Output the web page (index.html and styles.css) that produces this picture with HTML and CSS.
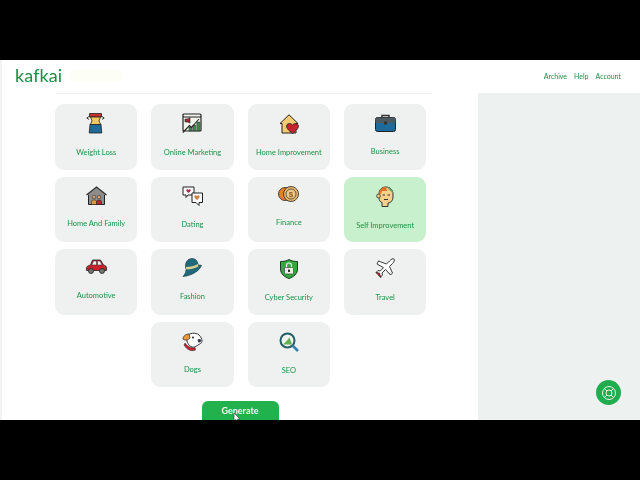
FILE: index.html
```html
<!DOCTYPE html>
<html lang="en">
<head>
<meta charset="utf-8">
<title>Kafkai</title>
<link rel="stylesheet" href="styles.css">
</head>
<body>
<div class="stage">
  <header class="topbar">
    <div class="brand"><span class="logo">kafkai</span><span class="logo-glow"></span></div>
    <nav class="nav"><a>Archive</a><a>Help</a><a>Account</a></nav>
  </header>
  <div class="content">
    <main class="main">
      <div class="panel">
        <div class="grid">
          <div class="card">
            <div class="slot"><svg width="20" height="21" viewBox="0 0 20 21"><path d="M3.500.5h12v3.500h-12z" fill="#c8312c" stroke="#222" stroke-width=".8"/><path d="M4.500 4h10l-1.500 4 2 4H4l2-4z" fill="#f2c75c" stroke="#222" stroke-width=".8"/><path d="M4 11.500h11l.8 8.500H3.200z" fill="#1f6a96" stroke="#222" stroke-width=".8"/><path d="M3 3.500.8 5 3 6.500M16 3.500 18.200 5 16 6.500" fill="none" stroke="#222" stroke-width=".9"/></svg></div>
            <span class="label">Weight Loss</span>
          </div>
          <div class="card">
            <div class="slot"><svg width="20" height="20" viewBox="0 0 20 20"><rect x="1" y="1" width="18" height="17" rx="1" fill="#f4f4ee" stroke="#222" stroke-width="1.200"/><path d="M1 4h18" stroke="#222"/><path d="M3 6h2.500l2.500-1.500V10L5.500 9H3z" fill="#a52a3a" stroke="#222" stroke-width=".6"/><path d="M7 18v-4h2.800v4zM10.800 18v-6h2.800v6zM14.800 18V9h3v9z" fill="#3d8a4a" stroke="#222" stroke-width=".5"/><path d="M.8 19.500 7.500 12.500l2 2L17 6" fill="none" stroke="#222" stroke-width="1.100"/></svg></div>
            <span class="label">Online Marketing</span>
          </div>
          <div class="card">
            <div class="slot slot-low"><svg width="20" height="20" viewBox="0 0 20 20"><path d="M10 .8 1 9.500h2V19h14V9.500h2z" fill="#f4cb72" stroke="#222" stroke-linejoin="round"/><path d="M13.500 19.500C9 16 7.500 14 7.500 12c0-2.500 4-3.500 6-1 2-2.500 6-1.500 6 1 0 2-1.500 4-6 7.500z" fill="#c5232f" stroke="#222" stroke-width=".8"/></svg></div>
            <span class="label">Home Improvement</span>
          </div>
          <div class="card">
            <div class="slot slot-low"><svg width="21" height="18" viewBox="0 0 21 18"><path d="M7 4V1.500h7V4" fill="none" stroke="#333" stroke-width="1.500"/><rect x=".5" y="3.500" width="20" height="14" rx="2" fill="#1c6b9a" stroke="#222"/><path d="M.5 5.500a2 2 0 0 1 2-2h16a2 2 0 0 1 2 2V9H.5z" fill="#4b5a63"/><rect x="9" y="7.500" width="3" height="3" fill="#333"/></svg></div>
            <span class="label lift-1">Business</span>
          </div>

          <div class="card">
            <div class="slot"><svg width="21" height="19" viewBox="0 0 21 19"><path d="M2.500 8h16v10.500h-16z" fill="#8d8d8d" stroke="#222"/><path d="M.5 9 10.500 1l10 8" fill="#8d8d8d" stroke="#333" stroke-width="1.300"/><circle cx="8" cy="11" r="1.800" fill="#d8a06a" stroke="#222" stroke-width=".5"/><circle cx="13" cy="11" r="1.800" fill="#d8a06a" stroke="#222" stroke-width=".5"/><path d="M5.500 18.500v-3c0-2 5-2 5 0v3z" fill="#dd9a3b" stroke="#222" stroke-width=".5"/><path d="M10.500 18.500v-3c0-2 5-2 5 0v3z" fill="#b5262e" stroke="#222" stroke-width=".5"/></svg></div>
            <span class="label lift-2">Home And Family</span>
          </div>
          <div class="card">
            <div class="slot"><svg width="21" height="20" viewBox="0 0 21 20"><path d="M1 1h11v8H6l-2 2.500V9H1z" fill="#fff" stroke="#222"/><path d="M6.500 7C4 5.300 4 3.700 4.800 3.300c.7-.3 1.300 0 1.700.6.400-.6 1-.9 1.700-.6C9 3.700 9 5.300 6.500 7z" fill="#a52a4a"/><path d="M10 7h10.500v9.500H17v3l-3-3h-4z" fill="#fff" stroke="#222"/><path d="M15 14c-3-2-3-4-2.200-4.500.8-.4 1.700 0 2.200.7.500-.7 1.400-1.100 2.200-.7.800.5.800 2.500-2.200 4.500z" fill="#c08850"/></svg></div>
            <span class="label lift-1">Dating</span>
          </div>
          <div class="card">
            <div class="slot"><svg width="21" height="16" viewBox="0 0 21 16"><circle cx="7" cy="8" r="6.500" fill="#e87f25" stroke="#222" stroke-width=".8"/><circle cx="13" cy="8" r="7.500" fill="#edb86a" stroke="#222" stroke-width=".8"/><circle cx="13" cy="8" r="5" fill="#f2c98a" stroke="#222" stroke-width=".7"/><text class="coin" x="13" y="10.500" text-anchor="middle">$</text></svg></div>
            <span class="label lift-3">Finance</span>
          </div>
          <div class="card card-active">
            <div class="slot"><svg width="18" height="21" viewBox="0 0 18 21"><path d="M3 8c0-4.500 3-7 7-7s7 3 7 7v3c0 3-2 6-5 6v3.500H6v-4c-2-.500-3-2.500-3-4.500z" fill="#f6cf8a" stroke="#222" stroke-width=".9"/><path d="M3 8c0-4.500 3-7 7-7l1 4H6l-1 3z" fill="#e0702a"/><path d="M10.500 1c3.500 0 6.500 3 6.500 6l-3.500-3z" fill="#5fa35a"/><circle cx="2.500" cy="10" r="1.900" fill="#f6cf8a" stroke="#222" stroke-width=".7"/><path d="M6.500 9h2.500M11.500 9H14M8 13.500h4" stroke="#222" stroke-width=".9" fill="none"/></svg></div>
            <span class="label">Self Improvement</span>
          </div>

          <div class="card">
            <div class="slot slot-low"><svg width="21" height="15" viewBox="0 0 21 15"><path d="M.5 11V8.500C1 7 3 6.500 4.500 6L6.500 1h8l3 5c2 .5 3 1.500 3 3v2.500H.5z" fill="#c9202c" stroke="#222" stroke-width=".8"/><path d="M7.500 2h3v4H5.800zM11.500 2h2.500L16 6h-4.500z" fill="#f2f2f2" stroke="#222" stroke-width=".5"/><circle cx="5" cy="12" r="2.500" fill="#777" stroke="#222" stroke-width=".8"/><circle cx="16" cy="12" r="2.500" fill="#777" stroke="#222" stroke-width=".8"/></svg></div>
            <span class="label lift-2">Automotive</span>
          </div>
          <div class="card">
            <div class="slot"><svg width="20" height="19" viewBox="0 0 20 19"><path d="M3.500 9C3 4 6 .5 10 .5s6 3 6 6.500c1.500 0 3.500 0 3.500.5-1 2.500-3 5-6.500 7-3 2-7 3.500-12 4C3 16 5 13 3.500 9z" fill="#1f6a7c" stroke="#14343c" stroke-width=".6"/><path d="M4 9c4 0 9-1 12-3l.3 2.500C13 10.500 8 11.500 4.300 11.500z" fill="#ddd08a"/></svg></div>
            <span class="label lift-1">Fashion</span>
          </div>
          <div class="card">
            <div class="slot slot-low"><svg width="18" height="20" viewBox="0 0 18 20"><path d="M9 .5C11.500 2 14 2.500 17.500 2.500V10c0 5-4 8-8.500 9.500C4.500 18 .5 15 .5 10V2.500C4 2.500 6.500 2 9 .5z" fill="#35a93f" stroke="#1d3b22"/><path d="M6.500 9V6.500a2.500 2.500 0 0 1 5 0V9" fill="none" stroke="#eee" stroke-width="1.200"/><rect x="4.500" y="8.500" width="9" height="6.500" rx="1" fill="#eef0e8" stroke="#333" stroke-width=".6"/><rect x="8" y="10.500" width="2" height="2.500" fill="#333"/></svg></div>
            <span class="label">Cyber Security</span>
          </div>
          <div class="card">
            <div class="slot"><svg width="20" height="21" viewBox="0 0 20 21"><path d="M19 1c.8 1 0 3-1.500 4.500l-3 3 3 6.500-2 2L10.500 11.500 7 15l.5 2-2 2-1.200-3.300L1 14.500l2-2 2.200.5 3.300-3.300L2 6 3.500 3l8 3 3-3C16 1.500 18 0 19 1z" fill="#fff" stroke="#222" stroke-width=".9"/><path d="M1 14.500 4.500 15l1.500 5L4 18z" fill="#b5262e" stroke="#222" stroke-width=".5"/></svg></div>
            <span class="label">Travel</span>
          </div>

          <div class="card card-skip">
            <div class="slot slot-low"><svg width="21" height="20" viewBox="0 0 21 20"><path d="M5 4c2-3 9-4 12-1 2 2 3 4 3 6s-2 3-4 4l-3 2c-4 1-7-2-8-6z" fill="#fff" stroke="#222" stroke-width=".9"/><path d="M1 7c0-3 3-5 6-5l1 4c-2 2-5 3-7 1z" fill="#e9983a" stroke="#222" stroke-width=".7"/><path d="M3 11c2 3 6 6 10 4.500l.5 2.500c-5 2-9-1-11.500-5z" fill="#c5232f" stroke="#222" stroke-width=".5"/><circle cx="11" cy="5.500" r="1" fill="#222"/><path d="M15.500 8c1-1.500 3-1.500 3.500 0s-1 3-2.500 2.500z" fill="#2b3a4a"/></svg></div>
            <span class="label lift-1">Dogs</span>
          </div>
          <div class="card">
            <div class="slot slot-low"><svg width="20" height="20" viewBox="0 0 20 20"><circle cx="8.500" cy="8.500" r="7" fill="#eef3ee" stroke="#265c66" stroke-width="2"/><path d="M4 12.500 7.500 9l3-3.500L13 12.500z" fill="#63b04f"/><path d="M13.500 13.500l5.500 5.500" stroke="#3a82ad" stroke-width="2.600"/></svg></div>
            <span class="label">SEO</span>
          </div>
        </div>
      </div>
      <button class="generate" type="button">Generate</button>
    </main>
    <aside class="aside"></aside>
  </div>
  <div class="help"><svg width="16" height="16" viewBox="0 0 16 16" fill="none" stroke="#e6f6ea" stroke-width="1"><circle cx="8" cy="8" r="6.500"/><circle cx="8" cy="8" r="3"/><path d="M3.500 3.500l2.500 2.500M12.500 3.500 10 6M3.500 12.500 6 10M12.500 12.500 10 10"/></svg></div>
  <svg class="cursor" width="8" height="10" viewBox="0 0 8 10"><path d="M1 0v8l2-1.500L4.500 10l1.500-.7L4.500 6H7z" fill="#fff" stroke="#333" stroke-width=".6"/></svg>
</div>
</body>
</html>
```

FILE: styles.css
```css
* { box-sizing: border-box; }
html, body { margin: 0; height: 100%; background: #000; overflow: hidden; }
body { padding: 60px 0; }

.stage {
  position: relative;
  height: 360px;
  display: flex;
  flex-direction: column;
  overflow: hidden;
  background: #fff;
  border-left: 2px solid #f1f4f3;
  font-family: "Lato", sans-serif;
  filter: blur(.3px);
}

.topbar {
  flex: 0 0 33px;
  display: flex;
  align-items: center;
  justify-content: space-between;
  padding: 0 19px 3px 13px;
}
.brand { display: flex; align-items: center; gap: 8px; }
.logo {
  font-family: "Lato", sans-serif;
  font-size: 18px;
  letter-spacing: .1px;
  line-height: 20px;
  color: #1a8f42;
}
.logo-glow { width: 52px; height: 11px; border-radius: 6px; background: #fdfef5; }
.nav { display: flex; gap: 7px; margin-top: 2px; }
.nav a { font-size: 7px; color: #1f9147; }

.content { flex: 1; display: flex; min-height: 0; }
.main {
  flex: 0 0 476px;
  display: flex;
  flex-direction: column;
  align-items: center;
}
.panel {
  align-self: flex-start;
  width: 378px;
  margin-left: 53px;
  padding-top: 10px;
  border-top: 1px solid #f3f5f4;
}
.grid {
  display: grid;
  grid-template-columns: repeat(4, 82.330px);
  grid-auto-rows: 65.500px;
  gap: 7px 14px;
}
.card {
  display: flex;
  flex-direction: column;
  align-items: center;
  padding-top: 9px;
  border-radius: 9px;
  background: #eef1f0;
}
.card-active { background: #c9f0cd; }
.card-skip { grid-column-start: 2; }

.slot { height: 35px; flex: none; }
.slot svg { display: block; }
.slot-low { padding-top: 1px; }

.label {
  font-size: 7.500px;
  line-height: 10px;
  color: #1f9147;
  white-space: nowrap;
}
.lift-1 { margin-top: -1px; }
.lift-2 { margin-top: -2px; }
.lift-3 { margin-top: -3px; }

.coin { font: 700 8px "Liberation Sans", sans-serif; fill: #8a5a20; }

.generate {
  flex: none;
  width: 77px;
  height: 24px;
  margin-top: 14px;
  padding: 0 0 5px;
  border: 0;
  border-radius: 6px;
  background: #21b14d;
  color: #f2fbf4;
  font: 700 9px "Lato", sans-serif;
}

.aside { flex: 1; background: #edf1f0; }

.help {
  position: absolute;
  left: 594px;
  top: 320px;
  width: 25px;
  height: 25px;
  display: flex;
  align-items: center;
  justify-content: center;
  border-radius: 50%;
  background: #21ad4e;
}
.cursor { position: absolute; left: 231px; top: 353px; }
```
